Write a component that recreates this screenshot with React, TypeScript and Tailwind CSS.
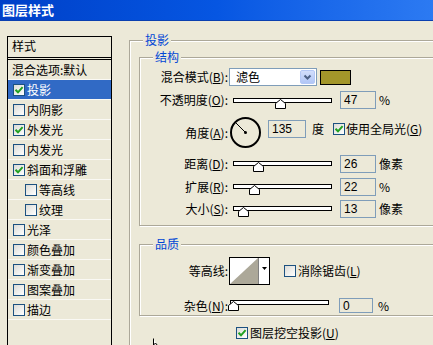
import React from 'react';

function Check() {
  return (
    <svg width="10" height="10" viewBox="0 0 10 10">
      <path d="M1.5 4.8 L4 7.3 L8.6 2.2" stroke="#21a121" strokeWidth="2" fill="none" />
    </svg>
  );
}

function CheckBox({ checked }: { checked?: boolean }) {
  return (
    <span className="w-[12px] h-[12px] border border-[#1c5180] bg-gradient-to-br from-[#dcdcd7] to-white flex items-center justify-center shrink-0">
      {checked && <Check />}
    </span>
  );
}

function Label({ children }: { children: React.ReactNode }) {
  return <div className="w-[88px] text-right shrink-0 whitespace-nowrap">{children}</div>;
}

function NumBox({ v, cls }: { v: string; cls: string }) {
  return (
    <div
      className={
        "border border-[#7f9db9] bg-[#ece9d8] flex items-center pl-[3px] text-[12px] font-['Liberation_Sans',sans-serif] shrink-0 " +
        cls
      }
    >
      {v}
    </div>
  );
}

function Slider({ pos, cls }: { pos: number; cls: string }) {
  return (
    <div className={"relative w-[103px] h-[14px] self-start shrink-0 " + cls}>
      <div className="absolute left-[2px] top-0 w-[99px] h-[5px] border border-black bg-white" />
      <svg className="absolute top-[1px]" style={{ left: pos - 5 }} width="11" height="10" viewBox="0 0 11 10">
        <path d="M0.5 9.5 V4.5 L5.5 0.5 L10.5 4.5 V9.5 Z" fill="#fff" stroke="#000" />
      </svg>
    </div>
  );
}

const items: { t: string; checked?: boolean; sel?: boolean; indent?: boolean; noCb?: boolean }[] = [
  { t: '混合选项:默认', noCb: true },
  { t: '投影', checked: true, sel: true },
  { t: '内阴影' },
  { t: '外发光', checked: true },
  { t: '内发光' },
  { t: '斜面和浮雕', checked: true },
  { t: '等高线', indent: true },
  { t: '纹理', indent: true },
  { t: '光泽' },
  { t: '颜色叠加' },
  { t: '渐变叠加' },
  { t: '图案叠加' },
  { t: '描边' },
];

export default function App() {
  return (
    <div className="w-[433px] h-[345px] overflow-hidden bg-[#ece9d8] relative text-[12px] leading-[14px] text-black font-['SimSun','Noto_Sans_CJK_SC',sans-serif]">
      {/* title bar */}
      <div className="h-[21px] bg-gradient-to-r from-[#0040c8] via-[#0656e2] to-[#2c7af2] flex items-center pl-[2px] border-b border-[#0a3fb0]">
        <span className="text-white font-bold text-[13px] leading-[16px]">图层样式</span>
      </div>

      <div className="flex">
        {/* left list */}
        <div className="ml-[7px] mt-[15px] w-[105px] h-[400px] border border-black shrink-0">
          <div className="h-[23px] pl-[4px] flex items-center pb-[3px] border-b-[3px] border-double border-black">
            样式
          </div>
          {items.map((it, i) => (
            <div
              key={i}
              className={
                'h-[20px] flex items-center border-b border-[#faf9f4] ' +
                (it.sel ? 'bg-[#316ac5] text-white ' : '') +
                (it.noCb ? 'pl-[4px]' : it.indent ? 'pl-[17px]' : 'pl-[5px]')
              }
            >
              {!it.noCb && <CheckBox checked={it.checked} />}
              <span className={it.noCb ? '' : 'ml-[2px]'}>{it.t}</span>
            </div>
          ))}
        </div>

        {/* right panel */}
        <div className="ml-[17px] mt-[19px] w-[340px] h-[330px] shrink-0 relative border border-[#aca899] shadow-[inset_1px_1px_0_#fff,1px_1px_0_#fff] pt-[16px] pl-[9px]">
          <div className="absolute left-[13px] top-[-8px] px-[2px] bg-[#ece9d8] text-[#0046d5]">投影</div>

          {/* 结构 */}
          <div className="relative w-[320px] border border-[#aca899] shadow-[inset_1px_1px_0_#fff,1px_1px_0_#fff] pb-[7px]">
            <div className="absolute left-[13px] top-[-8px] px-[2px] bg-[#ece9d8] text-[#0046d5]">结构</div>

            <div className="flex items-center h-[18px] mt-[10px]">
              <Label>
                混合模式(<u>B</u>):
              </Label>
              <div className="ml-[1px] w-[88px] h-[18px] border border-[#7f9db9] bg-white flex p-[1px] shrink-0">
                <div className="flex-1 flex items-center pl-[5px]">滤色</div>
                <div className="w-[15px] rounded-[2px] border border-[#b4c8f6] bg-gradient-to-b from-[#d2defb] to-[#b1c6f6] flex items-center justify-center">
                  <svg width="9" height="7" viewBox="0 0 9 7">
                    <path d="M1.5 1.5 L4.5 4.5 L7.5 1.5" stroke="#4d6185" strokeWidth="2" fill="none" />
                  </svg>
                </div>
              </div>
              <div className="ml-[3px] w-[31px] h-[15px] border border-black bg-[#a3962a] shrink-0" />
            </div>

            <div className="flex items-center h-[18px] mt-[5px]">
              <Label>
                不透明度(<u>O</u>):
              </Label>
              <Slider pos={49} cls="ml-[3px] mt-[7px]" />
              <NumBox v="47" cls="ml-[6px] w-[36px] h-[18px]" />
              <span className="ml-[3px]">%</span>
            </div>

            <div className="flex items-center h-[31px] mt-[8px]">
              <Label>
                角度(<u>A</u>):
              </Label>
              <svg className="ml-[1px] shrink-0" width="33" height="31" viewBox="0 0 33 31">
                <circle cx="16.5" cy="15.5" r="14.5" stroke="#000" strokeWidth="2" fill="none" />
                <line x1="16.5" y1="15.5" x2="7" y2="6" stroke="#000" strokeWidth="1" />
                <circle cx="16.5" cy="15.5" r="1.5" fill="#000" />
              </svg>
              <div className="flex items-center mb-[8px]">
                <NumBox v="135" cls="ml-[6px] w-[38px] h-[18px]" />
                <span className="ml-[6px]">度</span>
                <span className="ml-[9px]">
                  <CheckBox checked />
                </span>
                <span className="ml-[1px] whitespace-nowrap">
                  使用全局光(<u>G</u>)
                </span>
              </div>
            </div>

            <div className="flex items-center h-[18px] mt-[7px]">
              <Label>
                距离(<u>D</u>):
              </Label>
              <Slider pos={27} cls="ml-[3px] mt-[6px]" />
              <NumBox v="26" cls="ml-[6px] w-[36px] h-[18px]" />
              <span className="ml-[3px]">像素</span>
            </div>

            <div className="flex items-center h-[18px] mt-[5px]">
              <Label>
                扩展(<u>R</u>):
              </Label>
              <Slider pos={23} cls="ml-[3px] mt-[6px]" />
              <NumBox v="22" cls="ml-[6px] w-[36px] h-[18px]" />
              <span className="ml-[3px]">%</span>
            </div>

            <div className="flex items-center h-[18px] mt-[4px]">
              <Label>
                大小(<u>S</u>):
              </Label>
              <Slider pos={12} cls="ml-[3px] mt-[6px]" />
              <NumBox v="13" cls="ml-[6px] w-[36px] h-[18px]" />
              <span className="ml-[3px]">像素</span>
            </div>
          </div>

          {/* 品质 */}
          <div className="relative w-[320px] mt-[18px] border border-[#aca899] shadow-[inset_1px_1px_0_#fff,1px_1px_0_#fff] pb-[2px]">
            <div className="absolute left-[13px] top-[-8px] px-[2px] bg-[#ece9d8] text-[#0046d5]">品质</div>

            <div className="flex items-center h-[28px] mt-[12px]">
              <Label>等高线:</Label>
              <div className="ml-[1px] w-[41px] h-[28px] border border-black bg-white flex shrink-0">
                <svg width="28" height="26" viewBox="0 0 28 26" className="shrink-0">
                  <polygon points="0,26 28,0 28,26" fill="#aca899" />
                </svg>
                <div className="flex-1 border-l border-[#808080] flex justify-center pt-[9px]">
                  <svg width="5" height="3" viewBox="0 0 5 3">
                    <polygon points="0,0 5,0 2.5,3" fill="#000" />
                  </svg>
                </div>
              </div>
              <span className="ml-[14px]">
                <CheckBox />
              </span>
              <span className="ml-[2px] whitespace-nowrap">
                消除锯齿(<u>L</u>)
              </span>
            </div>

            <div className="flex items-center h-[15px] mt-[13px]">
              <Label>
                杂色(<u>N</u>):
              </Label>
              <Slider pos={5} cls="mt-[2px]" />
              <NumBox v="0" cls="ml-[8px] w-[34px] h-[15px]" />
              <span className="ml-[5px]">%</span>
            </div>
          </div>

          <div className="flex items-center mt-[10px] ml-[97px]">
            <CheckBox checked />
            <span className="ml-[2px] whitespace-nowrap">
              图层挖空投影(<u>U</u>)
            </span>
          </div>
        </div>
      </div>

      {/* mouse pointer */}
      <svg className="absolute left-[153px] top-[338px]" width="7" height="8" viewBox="0 0 7 8">
        <path d="M0.5 0.5 V7 L2.5 5 L4.5 7.5" stroke="#000" fill="#fff" strokeWidth="1" />
      </svg>
    </div>
  );
}
